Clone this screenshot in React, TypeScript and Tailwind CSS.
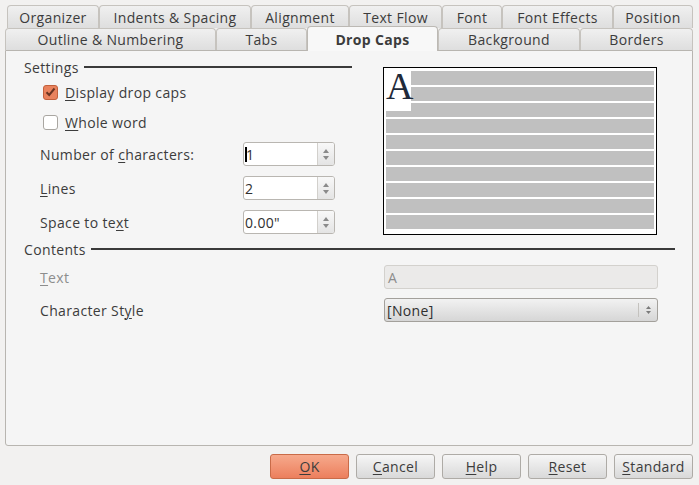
import React from "react";

const row1 = [
  { label: "Organizer", w: "w-[92px]" },
  { label: "Indents & Spacing", w: "w-[152px]" },
  { label: "Alignment", w: "w-[98px]" },
  { label: "Text Flow", w: "w-[93px]" },
  { label: "Font", w: "w-[60px]" },
  { label: "Font Effects", w: "w-[111px]" },
  { label: "Position", w: "w-[80px]" },
];

const row2 = [
  { label: "Outline & Numbering", w: "w-[211px]" },
  { label: "Tabs", w: "w-[91px]" },
  { label: "Drop Caps", w: "w-[131px]", active: true },
  { label: "Background", w: "w-[142px]" },
  { label: "Borders", w: "w-[113px]" },
];

function Tab({ label, w, active }: { label: string; w: string; active?: boolean }) {
  if (active) {
    return (
      <div
        className={`${w} h-[25px] -mt-[2px] relative z-10 flex items-center justify-center rounded-t-[4px] border border-b-0 border-[#bcb9b4] bg-[#f8f8f8] font-bold text-[#3c3c3c]`}
      >
        {label}
      </div>
    );
  }
  return (
    <div
      className={`${w} h-full flex items-center justify-center rounded-t-[4px] border border-b-0 border-[#c6c3be] bg-gradient-to-b from-[#f0f0f0] to-[#dedede] text-[#3c3c3c]`}
    >
      {label}
    </div>
  );
}

function U({ children }: { children: React.ReactNode }) {
  return <span className="underline underline-offset-2 decoration-1">{children}</span>;
}

function SpinField({ value, caret }: { value: string; caret?: boolean }) {
  return (
    <div className="w-[92px] h-[24px] flex rounded-[3px] border border-[#b9b6b1] bg-white overflow-hidden">
      <div className="flex-1 flex items-center pl-[1px] text-[#2f2f2f]">
        {caret && <span className="w-[2px] h-[15px] bg-black -mr-[1px]" />}
        <span>{value}</span>
      </div>
      <div className="w-[17px] border-l border-[#d2d0cc] bg-gradient-to-b from-[#f8f8f8] to-[#e4e4e4] flex flex-col items-center justify-center gap-[3px]">
        <svg width="6" height="4" viewBox="0 0 6 4">
          <path d="M0 4 L3 0 L6 4 Z" fill="#8a8a8a" />
        </svg>
        <svg width="6" height="4" viewBox="0 0 6 4">
          <path d="M0 0 L3 4 L6 0 Z" fill="#8a8a8a" />
        </svg>
      </div>
    </div>
  );
}

function Button({ children, primary }: { children: React.ReactNode; primary?: boolean }) {
  return (
    <div
      className={`w-[79px] h-[25px] flex items-center justify-center rounded-[3px] border text-[#3c3c3c] ${
        primary
          ? "border-[#c96b48] bg-gradient-to-b from-[#f6a98c] to-[#ec7f5d]"
          : "border-[#aeaba6] bg-gradient-to-b from-[#f6f6f6] to-[#d9d9d9]"
      }`}
    >
      {children}
    </div>
  );
}

export default function App() {
  return (
    <div
      className="w-[699px] h-[485px] bg-[#f2f1f0] text-[14px] tracking-[0.35px] text-[#3c3c3c] overflow-hidden"
      style={{ fontFamily: '"Open Sans", "DejaVu Sans", sans-serif' }}
    >
      {/* Tabs */}
      <div className="pt-[5px]">
        <div className="flex h-[23px] pl-[7px]">
          {row1.map((t) => (
            <Tab key={t.label} label={t.label} w={t.w} />
          ))}
        </div>
        <div className="flex h-[22px] pl-[5px]">
          {row2.map((t) => (
            <Tab key={t.label} label={t.label} w={t.w} active={t.active} />
          ))}
        </div>
      </div>

      {/* Panel */}
      <div className="ml-[5px] w-[688px] h-[396px] border border-[#b8b5b0] rounded-b-[3px] bg-[#f5f5f5] pl-[18px] pt-[6px] flex flex-col">
        <div className="flex items-start">
          {/* Settings column */}
          <div className="w-[328px] flex flex-col">
            <div className="h-[20px] flex items-center gap-[5px]">
              <span>Settings</span>
              <div className="flex-1 h-[2px] bg-[#3a3a3a]" />
            </div>
            <div className="mt-[5px] h-[20px] flex items-center pl-[19px] gap-[7px]">
              <div className="w-[15px] h-[15px] rounded-[3px] border border-[#c2603c] bg-[#e9825d] flex items-center justify-center">
                <svg width="11" height="10" viewBox="0 0 11 10">
                  <path d="M1.5 5.2 L4.2 8 L9.5 1.5" fill="none" stroke="#6b3422" strokeWidth="2" />
                </svg>
              </div>
              <span>
                <U>D</U>isplay drop caps
              </span>
            </div>
            <div className="mt-[10px] h-[20px] flex items-center pl-[19px] gap-[7px]">
              <div className="w-[15px] h-[15px] rounded-[3px] border border-[#a9a6a1] bg-white" />
              <span>
                <U>W</U>hole word
              </span>
            </div>
            <div className="mt-[10px] h-[24px] flex items-center">
              <div className="w-[219px] pl-[16px]">
                Number of <U>c</U>haracters:
              </div>
              <SpinField value="1" caret />
            </div>
            <div className="mt-[10px] h-[24px] flex items-center">
              <div className="w-[219px] pl-[16px]">
                <U>L</U>ines
              </div>
              <SpinField value="2" />
            </div>
            <div className="mt-[10px] h-[24px] flex items-center">
              <div className="w-[219px] pl-[16px]">
                Space to te<U>x</U>t
              </div>
              <SpinField value={'0.00"'} />
            </div>
          </div>

          {/* Preview */}
          <div className="ml-[31px] mt-[10px] w-[274px] h-[168px] border border-black bg-white relative">
            <div className="pt-[3px] px-[2px] flex flex-col gap-[2px]">
              {Array.from({ length: 10 }).map((_, i) => (
                <div key={i} className="h-[14px] bg-[#c0c0c0]" />
              ))}
            </div>
            <div className="absolute left-[2px] top-[3px] w-[25px] h-[40px] bg-white">
              <span
                className="absolute left-[0px] -top-[4px] text-[38px] leading-none tracking-normal text-[#1f2a3a]"
                style={{ fontFamily: '"Liberation Serif", serif' }}
              >
                A
              </span>
            </div>
          </div>
        </div>

        {/* Contents */}
        <div className="mt-[4px] w-[651px] h-[20px] flex items-center gap-[5px]">
          <span>Contents</span>
          <div className="flex-1 h-[2px] bg-[#3a3a3a]" />
        </div>
        <div className="mt-[6px] h-[24px] flex items-center">
          <div className="w-[360px] pl-[16px] text-[#8d8d8d]">
            <U>T</U>ext
          </div>
          <div className="w-[274px] h-[24px] rounded-[3px] border border-[#d3d1cd] bg-[#ebeae9] flex items-center pl-[3px] text-[#8d8d8d]">
            A
          </div>
        </div>
        <div className="mt-[9px] h-[24px] flex items-center">
          <div className="w-[360px] pl-[16px]">
            Character St<U>y</U>le
          </div>
          <div className="w-[274px] h-[24px] rounded-[3px] border border-[#a3a09b] bg-gradient-to-b from-[#f2f2f2] to-[#d6d6d6] flex items-center text-[#2f2f2f]">
            <span className="flex-1 pl-[2px]">[None]</span>
            <div className="h-[14px] w-px bg-[#c4c2be]" />
            <div className="w-[18px] flex flex-col items-center justify-center gap-[2px]">
              <svg width="5" height="3" viewBox="0 0 5 3">
                <path d="M0 3 L2.5 0 L5 3 Z" fill="#7a7a7a" />
              </svg>
              <svg width="5" height="3" viewBox="0 0 5 3">
                <path d="M0 0 L2.5 3 L5 0 Z" fill="#7a7a7a" />
              </svg>
            </div>
          </div>
        </div>
      </div>

      {/* Buttons */}
      <div className="mt-[8px] pl-[270px] flex gap-[7px]">
        <Button primary>
          <U>O</U>K
        </Button>
        <Button>
          <U>C</U>ancel
        </Button>
        <Button>
          <U>H</U>elp
        </Button>
        <Button>
          <U>R</U>eset
        </Button>
        <Button>
          <U>S</U>tandard
        </Button>
      </div>
    </div>
  );
}
